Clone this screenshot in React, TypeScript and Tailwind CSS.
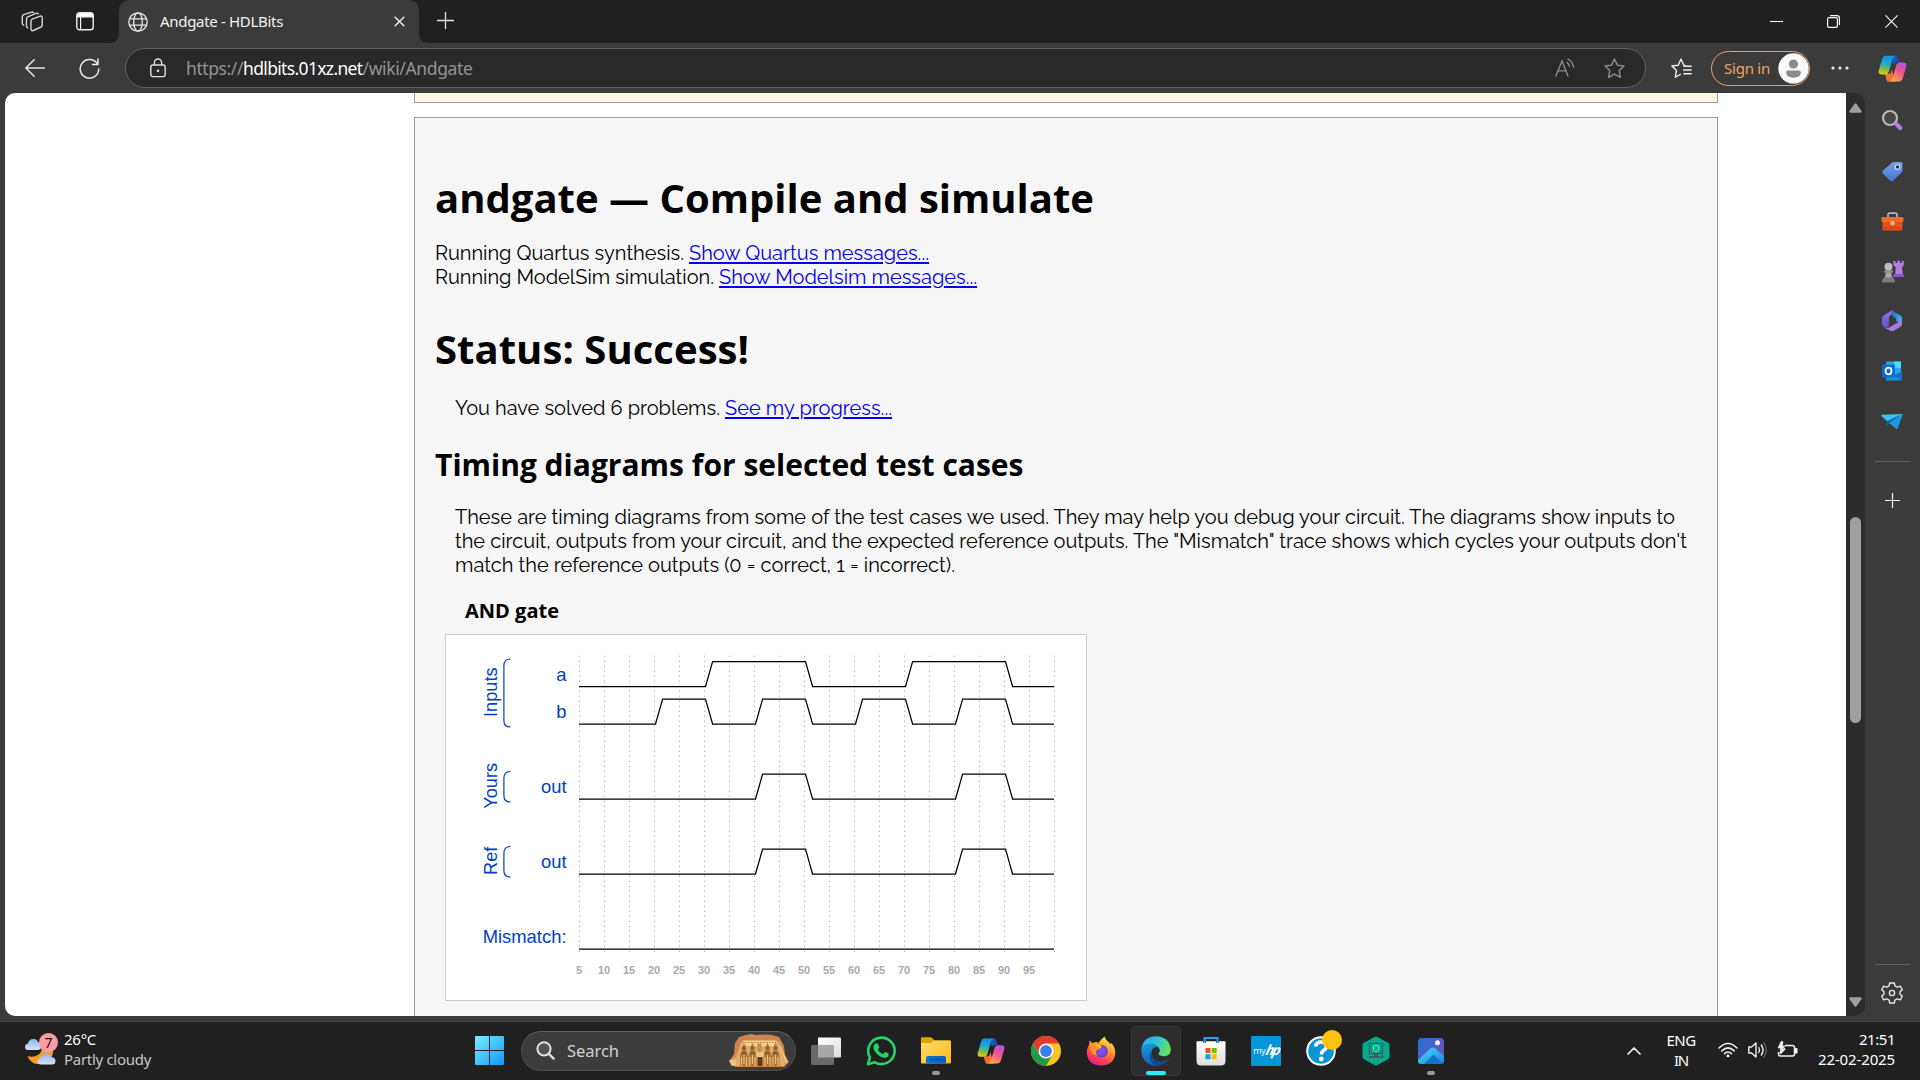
import React, { useLayoutEffect, useRef, useState } from "react";

/** A run of text whose tracking is adjusted so that it spans a given width. */
function Fit({ w, className = "", children }: { w: number; className?: string; children: string }) {
  const ref = useRef<HTMLSpanElement>(null);
  const [ls, setLs] = useState(0);
  useLayoutEffect(() => {
    if (!ref.current) return;
    const natural = ref.current.getBoundingClientRect().width;
    setLs((w - natural) / children.length);
  }, [w, children]);
  return (
    <span ref={ref} className={"whitespace-pre " + className} style={{ letterSpacing: ls + "px" }}>
      {children}
    </span>
  );
}

const ui = "font-['Noto_Sans','Open_Sans',sans-serif]";

/* ---------- browser chrome ---------- */

function TabBar() {
  return (
    <div className="flex h-[43px] items-end bg-[#202020] text-[#e6e6e6]">
      <div className="flex h-[43px] w-[119px] items-center bg-[#202020]">
        <svg className="ml-[21px]" width="23" height="22" viewBox="0 0 23 22" fill="none" stroke="#d6d6d6" strokeWidth="1.4" strokeLinejoin="round" strokeLinecap="round">
          <path d="M11.2 8.2 18.600 5.300q2.400-.8 2.600 1v7.600q0 1.500-1.200 2.100l-7.700 3.500q-2 .8-2.300-1V10q0-1.300 1.200-1.800Z" />
          <path d="M6.700 16.800l-.6-.4q-.6-.5-.6-1.400V7.900q0-1.500 1.200-2.100L14.900 2.300q1.600-.5 2.300.6" />
          <path d="M2.700 14.200l-.7-.4q-.7-.5-.7-1.500V5.700q0-1.500 1.200-2.100L10.500 1.100q1.400-.3 2 .5" />
        </svg>
        <svg className="ml-[32px]" width="18" height="19" viewBox="0 0 18 19" fill="none" stroke="#f0f0f0" strokeWidth="1.4">
          <rect x=".8" y="1" width="16.4" height="16.8" rx="2.8" />
          <path d="M1 2.8Q1.4 1 3.6 1h11q2.200 0 2.600 1.800v2H1Z" fill="#fff" />
          <path d="M4.600 5v12.600" strokeWidth="1.2" />
        </svg>
      </div>
      <div className="relative flex h-[43px] w-[300px] items-center rounded-t-[10px] bg-[#3b3b3b]">
        <svg className="absolute bottom-0 -left-[10px]" width="10" height="10"><path d="M10 0v10H0Q10 10 10 0Z" fill="#3b3b3b" /></svg>
        <svg className="absolute -right-[10px] bottom-0" width="10" height="10"><path d="M0 0v10h10Q0 10 0 0Z" fill="#3b3b3b" /></svg>
        <svg className="ml-[9px]" width="20" height="20" viewBox="0 0 20 20" fill="none" stroke="#e8e8e8" strokeWidth="1.3">
          <circle cx="10" cy="10" r="9.2" />
          <ellipse cx="10" cy="10" rx="4.3" ry="9.2" />
          <path d="M1.700 6.800h16.600M1.700 13.200h16.600" />
        </svg>
        <div className={ui + " mb-[2px] ml-[12px] w-[123px] text-[15px] leading-[20px] text-[#f4f4f4]"}>
          <Fit w={123}>Andgate - HDLBits</Fit>
        </div>
        <svg className="ml-[111px]" width="11" height="11" viewBox="0 0 11 11" stroke="#f0f0f0" strokeWidth="1.4"><path d="M.7.7l9.600 9.600M10.300.7.7 10.300" /></svg>
      </div>
      <svg className="mb-[14px] ml-[18px]" width="17" height="17" viewBox="0 0 17 17" stroke="#e6e6e6" strokeWidth="1.3"><path d="M8.500 0v17M0 8.500h17" /></svg>
      <div className="flex-1" />
      <div className="flex h-[43px] items-center">
        <svg width="13" height="13" viewBox="0 0 13 13" stroke="#f4f4f4" strokeWidth="1.1"><path d="M0 6.500h13" /></svg>
        <svg className="ml-[44px]" width="13" height="13" viewBox="0 0 13 13" fill="none" stroke="#f4f4f4" strokeWidth="1.2">
          <rect x=".6" y="2.600" width="9.800" height="9.800" rx="1.4" />
          <path d="M3 .6h7q2.400 0 2.400 2.400v7" />
        </svg>
        <svg className="mr-[22px] ml-[45px]" width="13" height="13" viewBox="0 0 13 13" stroke="#f4f4f4" strokeWidth="1.2"><path d="M.4.4l12.200 12.200M12.600.4.4 12.600" /></svg>
      </div>
    </div>
  );
}

function CopilotIcon({ size = 28, id }: { size?: number; id: string }) {
  return (
    <svg width={size} height={size} viewBox="0 0 28 28">
      <defs>
        <linearGradient id={id + "a"} x1="0.3" y1="0" x2="0.1" y2="1">
          <stop offset="0" stopColor="#1593dc" /><stop offset=".35" stopColor="#20a5d8" /><stop offset=".68" stopColor="#78bf4b" /><stop offset="1" stopColor="#ffc90c" />
        </linearGradient>
        <linearGradient id={id + "b"} x1="0.9" y1="0" x2="0.3" y2="1">
          <stop offset="0" stopColor="#ab57f0" /><stop offset=".45" stopColor="#ee4f8e" /><stop offset="1" stopColor="#ffa552" />
        </linearGradient>
        <linearGradient id={id + "c"} x1="0" y1="0" x2="1" y2="0">
          <stop offset="0" stopColor="#1266d4" /><stop offset="1" stopColor="#1b3fae" />
        </linearGradient>
      </defs>
      <path d="M13 1.600h3.600q2.200 0 2.900 2.300l1.300 4.300h-3.300q-2 0-2.600 2Z" fill={"url(#" + id + "c)"} />
      <path d="M7.400 26.500q2 0 3-2l3-9.700 3 11.700Z" fill="#f9643c" />
      <path d="M6.800 19.400l1.200 5q.6 2.100 2.600 2.100h7l-3.600-7.600Z" fill="#f4752f" />
      <path d="M7.600 1.600h9.200q-2 .4-2.800 3.200l-3.500 12q-.8 3-3.400 3H3.800q-4.100 0-3-4.100L4 4.900q1-3.300 3.600-3.300Z" fill={"url(#" + id + "a)"} />
      <path d="M20.400 26.500h-9.200q2-.4 2.800-3.200l3.500-12q.8-3 3.400-3h3.300q4.100 0 3 4.100L24 23.200q-1 3.300-3.600 3.300Z" fill={"url(#" + id + "b)"} />
    </svg>
  );
}

function Toolbar() {
  return (
    <div className="flex h-[50px] items-center bg-[#3b3b3b]">
      <svg className="ml-[25px]" width="20" height="18" viewBox="0 0 20 18" fill="none" stroke="#e8e8e8" strokeWidth="1.5" strokeLinecap="round" strokeLinejoin="round"><path d="M19.300 9H1M9.200.8.8 9l8.400 8.200" /></svg>
      <svg className="ml-[34px]" width="21" height="21" viewBox="0 0 21 21" fill="none" stroke="#e8e8e8" strokeWidth="1.5" strokeLinecap="round" strokeLinejoin="round"><path d="M18.600 6.200A9.300 9.300 0 1 0 19.800 11M19 1v5.500h-5.500" /></svg>
      <div className="ml-[25px] flex h-[40px] w-[1521px] items-center rounded-full border border-[#636363] bg-[#292929]">
        <svg className="ml-[24px]" width="16" height="20" viewBox="0 0 16 20" fill="none" stroke="#e0e0e0" strokeWidth="1.4">
          <rect x=".8" y="7" width="14.400" height="11.600" rx="2" />
          <path d="M4.400 7V4.600a3.600 3.600 0 0 1 7.200 0V7" />
          <circle cx="8" cy="12.800" r="1.300" fill="#e0e0e0" stroke="none" />
        </svg>
        <div className={ui + " ml-[20px] flex w-[290px] text-[17.500px] leading-[24px] text-[#949494]"}>
          <Fit w={57}>https://</Fit>
          <Fit w={119.5} className="text-white">hdlbits.01xz.net</Fit>
          <Fit w={110}>/wiki/Andgate</Fit>
        </div>
        <div className="flex-1" />
        <svg width="20" height="20" viewBox="0 0 20 20" fill="none" stroke="#8f8f8f" strokeWidth="1.3" strokeLinecap="round">
          <path d="M.8 18 7 3l6 15M3 12.800h8" />
          <path d="M12 4.400q2 1.400 2.400 4M13 1.200q4.600 2.400 5.600 8" />
        </svg>
        <svg className="mr-[20px] ml-[29px]" width="21" height="21" viewBox="0 0 21 21" fill="none" stroke="#8f8f8f" strokeWidth="1.4" strokeLinejoin="round"><path d="M10.500 1l2.900 6.100 6.600.9-4.800 4.600 1.200 6.700-5.900-3.200-5.900 3.200 1.200-6.700L1 8l6.600-.9Z" /></svg>
      </div>
      <svg className="ml-[25px]" width="21" height="21" viewBox="0 0 21 21" fill="none" stroke="#f0f0f0" strokeWidth="1.4" strokeLinejoin="round" strokeLinecap="round">
        <path d="M14 7.400l-1.200-.2L10 1 7.200 7.200.9 8l4.600 4.500-1.200 6.700 5-2.700" />
        <path d="M13 8.200h7.200M12.600 12h7.600M12.800 15.800h7.400" />
      </svg>
      <div className="ml-[19px] flex h-[35px] w-[99px] items-center justify-between rounded-full border-[1.5px] border-[#f0a15f] pl-[12px]">
        <span className={ui + " mb-[1px] text-[15px] leading-[20px] text-[#f3a263]"}><Fit w={46}>Sign in</Fit></span>
        <svg width="31" height="31" viewBox="0 0 31 31">
          <circle cx="15.500" cy="15.500" r="15.200" fill="#fafafa" />
          <circle cx="15.500" cy="11" r="4.600" fill="#8b8b8b" />
          <path d="M10 17.500h11q1.800 0 1.800 1.800 0 5.400-7.300 5.400t-7.300-5.400q0-1.800 1.800-1.800Z" fill="#8b8b8b" />
        </svg>
      </div>
      <svg className="ml-[21px]" width="18" height="4" viewBox="0 0 18 4" fill="#f0f0f0"><circle cx="2" cy="2" r="1.600" /><circle cx="9" cy="2" r="1.600" /><circle cx="16" cy="2" r="1.600" /></svg>
      <div className="ml-[29px]"><CopilotIcon id="cp1" size={29} /></div>
    </div>
  );
}

/* ---------- timing diagram ---------- */

const LEFT = 133;
const STEP = 25;

function wave(y: number, edges: number[]) {
  let high = false;
  let d = `M${LEFT} ${y}`;
  for (const t of edges) {
    const x = LEFT + (t / 5 - 1) * STEP;
    d += ` L${x + 1.5} ${high ? y - 25 : y}`;
    high = !high;
    d += ` L${x + 8.6} ${high ? y - 25 : y}`;
  }
  return d + ` L${LEFT + 19 * STEP} ${high ? y - 25 : y}`;
}

const traces = [
  { label: "a", y: 51.5, edges: [30, 50, 70, 90] },
  { label: "b", y: 89, edges: [20, 30, 40, 50, 60, 70, 80, 90] },
  { label: "out", y: 164, edges: [40, 50, 80, 90] },
  { label: "out", y: 239, edges: [40, 50, 80, 90] },
  { label: "Mismatch:", y: 314, edges: [] as number[] },
];

const groups = [
  { label: "Inputs", mid: 57.2, top: 24, bottom: 92 },
  { label: "Yours", mid: 150.8, top: 136.5, bottom: 167 },
  { label: "Ref", mid: 225.8, top: 211.5, bottom: 242 },
];

function TimingDiagram() {
  return (
    <div className="mt-[11px] ml-[10px] h-[367px] w-[642px] border border-[#cccccc] bg-white">
      <svg width="640" height="365" viewBox="0 0 640 365" className="font-['Liberation_Sans',Arial,sans-serif]">
        {Array.from({ length: 20 }, (_, i) => (
          <path key={i} d={`M${LEFT + i * STEP + 0.5} 20.500V318`} stroke="#bdbdbd" strokeWidth="1.1" strokeDasharray="1.400 3.600" />
        ))}
        {Array.from({ length: 19 }, (_, i) => (
          <text key={i} x={LEFT + i * STEP} y="339" textAnchor="middle" fontSize="11" fontWeight="bold" fill="#aaaaaa">{(i + 1) * 5}</text>
        ))}
        {traces.map((t, i) => (
          <g key={i}>
            <text x="120.500" y={t.y - 6} textAnchor="end" fontSize="18.400" fill="#0041c4">{t.label}</text>
            <path d={wave(t.y, t.edges)} fill="none" stroke="#000" strokeWidth="1.250" />
          </g>
        ))}
        {groups.map((g) => (
          <g key={g.label}>
            <text transform={`translate(51.3 ${g.mid}) rotate(-90)`} textAnchor="middle" fontSize="18.200" fill="#0041c4">{g.label}</text>
            <path d={`M64.500 ${g.top}q-6.600 0-6.600 6.600V${g.bottom - 6.6}q0 6.600 6.600 6.600`} fill="none" stroke="#0041c4" strokeWidth="1.2" />
          </g>
        ))}
      </svg>
    </div>
  );
}

/* ---------- page ---------- */

const head = "font-['Open_Sans','Noto_Sans',sans-serif] font-bold whitespace-nowrap";
const link = "text-[#0000ee] underline decoration-[1.5px] underline-offset-[2px]";

function Page() {
  return (
    <div className="h-[923px] w-[1841px] overflow-hidden rounded-l-[10px] bg-white pl-[409px] font-[Raleway,Lato,sans-serif] text-[20px] leading-[24px] text-black">
      <div className="h-[10px] w-[1304px] border border-t-0 border-[#999999] bg-[#fff6e5]" />
      <div className="mt-[14px] h-[920px] w-[1304px] border border-[#999999] bg-[#f6f6f6] pl-[20px]">
        <h1 className={head + " mt-[56px] text-[40px] leading-[48px]"}><Fit w={659}>andgate — Compile and simulate</Fit></h1>
        <div className="mt-[19px]">
          <div className="flex"><Fit w={254}>{"Running Quartus synthesis. "}</Fit><Fit w={240} className={link}>Show Quartus messages...</Fit></div>
          <div className="flex"><Fit w={284}>{"Running ModelSim simulation. "}</Fit><Fit w={258} className={link}>Show Modelsim messages...</Fit></div>
        </div>
        <h1 className={head + " mt-[36px] text-[40px] leading-[48px]"}><Fit w={314}>Status: Success!</Fit></h1>
        <p className="mt-[23px] ml-[20px] flex"><Fit w={270}>{"You have solved 6 problems. "}</Fit><Fit w={167} className={link}>See my progress...</Fit></p>
        <h2 className={head + " mt-[27px] text-[30px] leading-[36px]"}><Fit w={588.5}>Timing diagrams for selected test cases</Fit></h2>
        <div className="mt-[22px] ml-[20px] flex flex-col items-start">
          <Fit w={1220}>These are timing diagrams from some of the test cases we used. They may help you debug your circuit. The diagrams show inputs to</Fit>
          <Fit w={1232}>the circuit, outputs from your circuit, and the expected reference outputs. The "Mismatch" trace shows which cycles your outputs don't</Fit>
          <Fit w={500}>match the reference outputs (0 = correct, 1 = incorrect).</Fit>
        </div>
        <h4 className={head + " mt-[22px] ml-[30px] text-[20px] leading-[24px]"}><Fit w={94}>AND gate</Fit></h4>
        <TimingDiagram />
      </div>
    </div>
  );
}

function Scrollbar() {
  return (
    <div className="flex h-[923px] w-[19px] flex-col items-center rounded-r-[10px] bg-[#2c2c2c]">
      <svg className="mt-[10px]" width="13" height="10" viewBox="0 0 13 10"><path d="M5.600.8q.9-1 1.800 0l5 7q.8 1.800-1 2H1.600q-1.800-.2-1-2Z" fill="#9f9f9f" /></svg>
      <div className="mt-[404px] h-[206px] w-[11px] rounded-full bg-[#9f9f9f]" />
      <div className="flex-1" />
      <svg className="mb-[9px] rotate-180" width="13" height="10" viewBox="0 0 13 10"><path d="M5.600.8q.9-1 1.800 0l5 7q.8 1.800-1 2H1.600q-1.800-.2-1-2Z" fill="#9f9f9f" /></svg>
    </div>
  );
}

function Sidebar() {
  const cell = "flex h-[50px] w-full items-center justify-center";
  return (
    <div className="flex h-[928px] w-[54px] flex-col items-center pt-[3px]">
      <div className={cell}>
        <svg className="mb-[2px]" width="22" height="22" viewBox="0 0 22 22" fill="none">
          <circle cx="9" cy="9" r="7" stroke="#b9b9b9" strokeWidth="2.200" fill="#454545" />
          <path d="M15.600 15.200l3.600 3.800" stroke="#b77bef" strokeWidth="4.200" strokeLinecap="round" />
        </svg>
      </div>
      <div className={cell}>
        <svg width="21" height="21" viewBox="0 0 21 21">
          <defs><linearGradient id="tag" x1="0" y1="0" x2="0" y2="1"><stop offset="0" stopColor="#6fa3f0" /><stop offset="1" stopColor="#4a74cf" /></linearGradient></defs>
          <path d="M12 1h7q1.500 0 1.500 1.500v7q0 1-.7 1.700l-8.600 8.500q-1.500 1.300-3 0L1 12.500q-1.300-1.500 0-3L10 1.800q.8-.8 2-.8Z" fill="url(#tag)" />
          <circle cx="15.500" cy="6" r="2.300" fill="#333" stroke="#dfe6f4" strokeWidth="1.100" />
        </svg>
      </div>
      <div className={cell}>
        <svg width="23" height="19" viewBox="0 0 23 19">
          <path d="M7 6V3q0-1.800 1.800-1.800h5.400Q16 1.200 16 3v3" fill="none" stroke="#b5b5b5" strokeWidth="1.700" />
          <rect x="1.500" y="6" width="20" height="12.500" rx="1.600" fill="#e8501a" />
          <rect x=".5" y="5" width="22" height="5" rx="1.200" fill="#f36a2b" />
          <path d="M1.500 16h20" stroke="#c93a0c" strokeWidth="1" />
          <circle cx="11.500" cy="11.200" r="2.200" fill="#c5bdb8" />
        </svg>
      </div>
      <div className={cell}>
        <svg width="23" height="23" viewBox="0 0 23 23">
          <path d="M12.300 1h2.200v2h1.800V.8h2.600V3h1.800V1h2v4.500l-1.600 1.600.6 6.400 1 3.200h-9.400l1-3.200.4-6.400-2.400-2Z" fill="#b77be8" />
          <path d="M12.800 14h9.400l.8 3H12Z" fill="#8d55c4" />
          <circle cx="7.500" cy="6.800" r="4" fill="#bdbdbd" />
          <path d="M5.500 10h4l1.800 8H3.600Z" fill="#a8a8a8" />
          <rect x="2.800" y="10.500" width="9.400" height="2.200" rx="1.100" fill="#8f8f8f" />
          <path d="M3 17.300h9l2 3.200q.5 2-1.500 2h-10q-2 0-1.500-2Z" fill="#7d7d7d" />
        </svg>
      </div>
      <div className={cell}>
        <svg width="22" height="22" viewBox="0 0 22 22">
          <defs>
            <linearGradient id="ma" x1="0" y1="0" x2="0" y2="1"><stop offset="0" stopColor="#a06fe0" /><stop offset="1" stopColor="#5358c6" /></linearGradient>
            <linearGradient id="mb" x1="0" y1="0" x2="1" y2="0"><stop offset="0" stopColor="#1b56c8" /><stop offset="1" stopColor="#46b9ee" /></linearGradient>
          </defs>
          <path d="M11 .8l8.500 4.700q1.500 1 1.500 2.700v6L15.200 11V8.500L8.200 4Z" fill="url(#mb)" />
          <path d="M12 .6 8.500 6.300q-1 1.500-.7 3.200v7.200l-3.200 1.600Q1 16.500 1 13.600V8q0-1.700 1.500-2.600L9.500 1.200Q11 .4 12 .6Z" fill="url(#ma)" />
          <path d="M21 10v4.200q0 1.700-1.500 2.600l-6.800 4q-1.700.9-3.400 0l-5.500-3q3 .8 5.500-.9l5-3.200Z" fill="#a878d8" />
        </svg>
      </div>
      <div className={cell}>
        <svg width="22" height="22" viewBox="0 0 22 22">
          <rect x="5" y="1.500" width="15" height="14" rx="1.200" fill="#28a8ea" />
          <path d="M13 1.500h7V8h-7Z" fill="#50d9ff" />
          <path d="M5 11l9 4 7-4v8.500q0 1-1 1H5Z" fill="#1490df" />
          <path d="M12 16l9-5v9Z" fill="#1b6fc0" />
          <rect x="1" y="4.500" width="13" height="13" rx="1.200" fill="#0a6cce" />
          <ellipse cx="7.500" cy="11" rx="3" ry="3.300" fill="none" stroke="#fff" strokeWidth="1.800" />
        </svg>
      </div>
      <div className={cell}>
        <svg width="22" height="17" viewBox="0 0 22 17">
          <path d="M.8 1.800 21.200 1q.6.100.3.700L16.500 15q-.5 1.300-1.600.3L6.500 8.500.3 3Q0 2 .8 1.800Z" fill="#3cc3f2" />
          <path d="M21.300 1 6.200 8 5 12.500q.3.900 1 .3l3.500-3Z" fill="#1263b4" />
          <path d="M21.400 1.200 9.500 10.500l5.400 4.800q1.100 1 1.600-.3Z" fill="#199ae0" />
        </svg>
      </div>
      <div className="mt-[15px] h-px w-[35px] bg-[#626262]" />
      <svg className="mt-[31px]" width="15" height="15" viewBox="0 0 15 15" stroke="#f0f0f0" strokeWidth="1.200"><path d="M7.500 0v15M0 7.500h15" /></svg>
      <div className="flex-1" />
      <div className="h-px w-[35px] bg-[#626262]" />
      <svg className="mt-[17px] mb-[17px]" width="22" height="22" viewBox="-11 -11 22 22" fill="none" stroke="#e8e8e8" strokeWidth="1.400" strokeLinejoin="round">
        <path d="M-2.300-10 2.300-10 3-7 5.200-5.800 8.300-6.800 10.300-3 8-1.200V1.200L10.300 3 8.300 6.800 5.200 5.800 3 7 2.300 10H-2.300L-3 7-5.200 5.800-8.300 6.800-10.300 3-8 1.200V-1.200L-10.300-3-8.300-6.800-5.200-5.800-3-7Z" />
        <circle r="2.600" />
      </svg>
    </div>
  );
}

/* ---------- taskbar ---------- */

function Cell({ children, mark }: { children: React.ReactNode; mark?: "dot" }) {
  return (
    <div className="relative flex h-[50px] w-[55px] items-center justify-center pb-[1px]">
      {children}
      {mark && <div className="absolute bottom-[1px] left-[23.500px] h-[4px] w-[8px] rounded-full bg-[#9a9a9a]" />}
    </div>
  );
}

function Temple() {
  return (
    <svg width="60" height="34" viewBox="0 0 60 34">
      <path d="M1 26 5 20 6 9 10 3l7-2 5-1 5 1 10-.5 6 .5 7 2 5 9 1 9 4 7-5 5H6Z" fill="#cf8551" />
      <path d="M1 26l6-3 5-15 3-2h31l4 2 8 19-3 5H7Z" fill="#e0ac69" />
      <path d="M14 7h32l2 5H12Z" fill="#f3d08c" />
      <path d="M13 8.500h34" stroke="#a97439" strokeWidth="1" strokeDasharray="1.500 1.500" />
      {[15, 23.5, 38.5, 46.5].map((x) => (
        <g key={x}>
          <path d={`M${x - 4} 32v-10l2-5 0-4 2-4 2 4v4l2 5v10Z`} fill="#a9733a" />
          <path d={`M${x - 2.5} 32v-9M${x + 2.5} 32v-9M${x} 21v9`} stroke="#e9c07c" strokeWidth="1.200" />
          <path d={`M${x - 2} 14h4M${x - 3} 19h6`} stroke="#6f4820" strokeWidth="1" />
        </g>
      ))}
      <rect x="28.500" y="9.500" width="4" height="8" fill="#c08a4c" />
      <path d="M27.500 18.500h7v4.500h-7Z" fill="#eccb88" />
      <rect x="28.500" y="23" width="5" height="9" fill="#5c3a1b" />
      <path d="M1 27h5v4H3ZM51 12l7 17" stroke="#efc887" strokeWidth="1.500" fill="#f0c98a" />
    </svg>
  );
}

function Taskbar() {
  return (
    <div className={ui + " flex h-[59px] items-center border-t border-[#424242] bg-[#202020] text-[15px] leading-[20px] text-white"}>
      <div className="flex w-[475px] items-center">
        <svg className="ml-[24px]" width="36" height="36" viewBox="0 0 36 36">
          <defs>
            <linearGradient id="cl" x1="0" y1="0" x2="0" y2="1"><stop offset="0" stopColor="#8fb2ee" /><stop offset="1" stopColor="#d6e4fb" /></linearGradient>
          </defs>
          <path d="M29 16q1 7-4 10.500-6 5-13 4.500-6-1.500-8.500-8 6 2 11-1.500 3-2 3-6Z" fill="#f59a23" />
          <path d="M4 17q-3 0-3-3 0-3 3-3.500 1-5 6-4.500 3 0 4 3 3.500.5 3.500 4T14 17Z" fill="url(#cl)" />
          <path d="M17 31.500q-3.500 0-3.500-3t3-3.500q1-4.500 5.500-4.500t5.500 3.500q4 .5 4 4T28 31.500Z" fill="url(#cl)" />
          <circle cx="24.500" cy="9.500" r="9.500" fill="#ff99a4" />
          <text x="24.500" y="14.700" textAnchor="middle" fontSize="14" fill="#111">7</text>
        </svg>
        <div className="mb-[4px] ml-[4px] flex flex-col items-start">
          <Fit w={32}>26°C</Fit>
          <Fit w={87} className="text-[#c6c6c6]">Partly cloudy</Fit>
        </div>
      </div>
      <svg className="mb-[1px]" width="29" height="29" viewBox="0 0 29 29">
        <defs><linearGradient id="win" gradientUnits="userSpaceOnUse" x1="0" y1="0" x2="29" y2="29"><stop offset="0" stopColor="#78eeff" /><stop offset="1" stopColor="#0f97fb" /></linearGradient></defs>
        <path d="M1 0h13v14H0V1Q0 0 1 0ZM15 0h13q1 0 1 1v13H15ZM0 15h14v14H1q-1 0-1-1ZM15 15h14v13q0 1-1 1H15Z" fill="url(#win)" />
      </svg>
      <div className="mb-[1px] ml-[17px] flex h-[40px] w-[275px] items-center rounded-full border border-[#4c4c4c] border-t-[#616161] bg-[#3c3c3c]">
        <svg className="ml-[14px]" width="19" height="19" viewBox="0 0 19 19" fill="none" stroke="#e0e0e0" strokeWidth="2" strokeLinecap="round"><circle cx="8" cy="7.800" r="6.600" fill="#505254" /><path d="M12.800 12.800l4.800 4.800" strokeWidth="2.400" /></svg>
        <span className="ml-[12px] w-[162px] text-[16.500px] leading-[20px] text-[#d2d2d2]"><Fit w={52}>Search</Fit></span>
        <Temple />
      </div>
      <div className="ml-[2.500px] flex">
        <Cell>
          <svg width="30" height="28" viewBox="0 0 30 28">
            <defs><linearGradient id="tv" x1="0" y1="0" x2="1" y2="1"><stop offset="0" stopColor="#fff" /><stop offset="1" stopColor="#dcdcdc" /></linearGradient></defs>
            <rect x="7" y=".5" width="23" height="20" rx="1" fill="url(#tv)" />
            <rect x="0" y="8" width="23" height="20" rx="1.500" fill="#6a6a6a" />
            <rect x="7" y="8" width="16" height="12.500" fill="#a8a8a8" />
          </svg>
        </Cell>
        <Cell>
          <svg width="30" height="30" viewBox="0 0 30 30">
            <path d="M2 28.200 3.900 21.300A13.200 13.200 0 1 1 8.800 26.300Z" fill="#202020" stroke="#25d366" strokeWidth="2.600" strokeLinejoin="round" />
            <path d="M10 7.600h1.200q.6 0 .9.700l1.100 2.700q.2.500-.2 1l-1 1.300q-.3.400 0 .8 1.600 2.700 4.500 3.900.5.200.9-.2l1.200-1.500q.4-.5 1-.3l2.600 1.200q.6.300.6.900-.1 3-3.200 3.600-2 .4-5.300-1.300-4-2-6.200-6.200-1-2-.6-3.800.5-2 1.700-2.700Z" fill="#25d366" />
          </svg>
        </Cell>
        <Cell mark="dot">
          <svg width="30" height="27" viewBox="0 0 30 27">
            <defs>
              <linearGradient id="fo" x1="0" y1="0" x2="1" y2="1"><stop offset="0" stopColor="#ffdf6a" /><stop offset="1" stopColor="#fbb81b" /></linearGradient>
              <linearGradient id="fb" x1="0" y1="0" x2="1" y2="0"><stop offset="0" stopColor="#0f76ce" /><stop offset="1" stopColor="#0f5cb2" /></linearGradient>
            </defs>
            <path d="M0 1.500Q0 .3 1.200.3h8.500q.8 0 1.400.6L13.500 3.500H29v4H0Z" fill="#e0a208" />
            <path d="M0 6h9.500q1 0 1.600-.7l1.700-1.800H29q1 0 1 1v21q0 1-1 1H1q-1 0-1-1Z" fill="url(#fo)" />
            <path d="M5 26.500V21q0-2 2-2h16q2 0 2 2v5.500Z" fill="url(#fb)" />
            <path d="M8.500 22.700h13" stroke="#0b3f82" strokeWidth="1" />
          </svg>
        </Cell>
        <Cell><CopilotIcon id="cp2" size={28} /></Cell>
        <Cell>
          <svg width="30" height="30" viewBox="-15 -15 30 30">
            <circle r="15" fill="#fcc31e" />
            <path d="M-13-7.500A15 15 0 0 1 13-7.500H0L-6.500 3.750Z" fill="#e33b2e" />
            <path d="M-13-7.500A15 15 0 0 0 0 15L6.500 3.750H-6.500Z" fill="#229a48" />
            <circle r="7.500" fill="#fff" />
            <circle r="5.900" fill="#3b7ded" />
          </svg>
        </Cell>
        <Cell>
          <svg width="30" height="30" viewBox="0 0 30 30">
            <defs>
              <linearGradient id="ff" x1=".8" y1="0" x2=".3" y2="1"><stop offset="0" stopColor="#fff14a" /><stop offset=".35" stopColor="#ffa62c" /><stop offset=".7" stopColor="#ff4a46" /><stop offset="1" stopColor="#e8148a" /></linearGradient>
              <radialGradient id="fg"><stop offset="0" stopColor="#9a4ff2" /><stop offset="1" stopColor="#5f45c9" /></radialGradient>
            </defs>
            <path d="M18.500.5q1 3.500 4.500 6l1.500 2 .3-2Q29.500 11 29.300 17q-.8 12-14.300 12.700Q2 29 .8 17.500.5 13 3 8.500L3.500 4.500 6.500 7q3-1.500 5.500-1l-1 3q3-5 7.500-8.500Z" fill="url(#ff)" />
            <circle cx="15.500" cy="15.300" r="6.300" fill="url(#fg)" />
            <path d="M4 9.500q4-3 8-1l3.500 2.500q-1 2.500-4.500 2.700-2.300 2.800.5 5.800Q6 19 5 14Z" fill="#ff9426" />
            <path d="M8 8q5-1 8 2.500l-3 1.500Z" fill="#ffbe3c" />
          </svg>
        </Cell>
        <div className="relative mx-[2.500px] flex h-[50px] w-[50px] items-center justify-center rounded-[5px] border border-[#373737] bg-[#2d2d2d]">
          <svg className="mb-[1px]" width="30" height="30" viewBox="0 0 30 30">
            <defs>
              <linearGradient id="ea" x1="0" y1=".2" x2="1" y2=".5"><stop offset="0" stopColor="#2aa9e6" /><stop offset=".5" stopColor="#2fc5d4" /><stop offset="1" stopColor="#66e05a" /></linearGradient>
              <linearGradient id="eb" x1="0" y1="0" x2=".3" y2="1"><stop offset="0" stopColor="#1b9de2" /><stop offset="1" stopColor="#0b63b8" /></linearGradient>
            </defs>
            <path d="M.3 13.500Q2 .5 15 .2q13 .5 14.800 12.500.5 6-5 7.200-4 .8-6.800-.9-1-.8 0-2 1.800-3-.8-6Q9 5.500.3 13.500Z" fill="url(#ea)" />
            <path d="M.2 15Q1 8 9 7.500q6 .2 8.700 3.800-4.700-1.300-6.700 3-1.500 4.500 1.500 9 2.500 3 6.800 4.900-4 2-9 .7Q1 25.500.2 15Z" fill="url(#eb)" />
            <path d="M11 14.300q-2 8 5 10.700 6 1.500 11.500-2.200.7-.3.300.6-3.300 5-9.300 6.200-8 .4-9.500-7.600-.7-5 2-7.700Z" fill="#10498f" />
          </svg>
          <div className="absolute bottom-0 left-[14px] h-[4px] w-[20px] rounded-full bg-[#29eeff]" />
        </div>
        <Cell>
          <svg width="30" height="30" viewBox="0 0 30 30">
            <defs><linearGradient id="st" x1="0" y1="0" x2="0" y2="1"><stop offset="0" stopColor="#fff" /><stop offset="1" stopColor="#dedede" /></linearGradient></defs>
            <path d="M8.500 7V2h13v5" fill="none" stroke="#23a9ea" strokeWidth="2" />
            <path d="M.5 6q0-.8.800-.8H7v1.500h3V5.200h10v1.500h3V5.200h5.700q.8 0 .8.800v19q0 4.500-4.500 4.500H5Q.5 29.500.5 25Z" fill="url(#st)" />
            <path d="M9.500 12h5v5h-5Z" fill="#f25022" /><path d="M15.700 12h5v5h-5Z" fill="#7fba00" />
            <path d="M9.500 18.200h5v5h-5Z" fill="#00a4ef" /><path d="M15.700 18.200h5v5h-5Z" fill="#ffb900" />
          </svg>
        </Cell>
        <Cell>
          <div className="flex h-[30px] w-[30px] items-center justify-center rounded-[1px] bg-[#0496d6] pb-[1px] font-['Open_Sans',sans-serif] leading-none">
            <span className="text-[9px] tracking-[-0.200px] text-white">my</span>
            <span className="-skew-x-12 text-[14px] font-bold tracking-[-1.800px] text-white italic">hp</span>
          </div>
        </Cell>
        <Cell>
          <div className="relative h-[30px] w-[30px]">
            <svg width="30" height="30" viewBox="0 0 30 30">
              <circle cx="15" cy="15" r="13.800" fill="#0a94d4" stroke="#fff" strokeWidth="2" />
              <path d="M9.500 10.500q.8-4.500 5.500-4.500t5.500 4.300q0 2.700-3 4.200-2 1.200-2 4" fill="none" stroke="#fff" strokeWidth="3.600" />
              <circle cx="15.300" cy="23" r="2.400" fill="#fff" />
            </svg>
            <div className="absolute -top-[6px] left-[16px] size-[20px] rounded-full bg-[#ffc20e]" />
          </div>
        </Cell>
        <Cell>
          <svg width="28" height="30" viewBox="0 0 28 30">
            <path d="M12.500 1q1.500-.8 3 0l11 6q1 .7 1 2v12q0 1.300-1 2l-11 6q-1.500.8-3 0l-11-6q-1-.7-1-2V9q0-1.300 1-2Z" fill="#05a88c" />
            <rect x="7.500" y="7.500" width="13" height="10" fill="none" stroke="#3b5f60" strokeWidth="1.300" />
            <path d="M12 17.500h4v2.200h-4ZM7 20h11v2H7ZM19 19.500h2.500v2.500H19Z" fill="#3b5f60" />
            <path d="M12 9.500h4l.5 1.500v3L14 16l-2.500-2v-3Z" fill="none" stroke="#4ff0dc" strokeWidth="1" />
          </svg>
        </Cell>
        <Cell mark="dot">
          <svg width="26" height="26" viewBox="0 0 26 26">
            <defs>
              <linearGradient id="pa" x1="0" y1="0" x2="1" y2="1"><stop offset="0" stopColor="#1f72d6" /><stop offset="1" stopColor="#8448b0" /></linearGradient>
              <linearGradient id="pb" x1="0" y1="0" x2="1" y2="1"><stop offset="0" stopColor="#4fdcff" /><stop offset="1" stopColor="#1284dc" /></linearGradient>
              <clipPath id="pc"><rect width="26" height="26" rx="3.500" /></clipPath>
            </defs>
            <g clipPath="url(#pc)">
              <rect width="26" height="26" fill="url(#pa)" />
              <path d="M-1 23 12.500 10.500q2.500-2 5 0L27 19v8H-1Z" fill="url(#pb)" />
              <path d="M5 27 15.500 16.500 27 27Z" fill="#1373cc" />
              <circle cx="19.500" cy="4.700" r="2.500" fill="#f2ecff" />
            </g>
          </svg>
        </Cell>
      </div>
      <div className="flex-1" />
      <svg width="14" height="8" viewBox="0 0 14 8" fill="none" stroke="#f0f0f0" strokeWidth="1.700" strokeLinecap="round" strokeLinejoin="round"><path d="M1 7l6-6 6 6" /></svg>
      <div className="mb-[3px] ml-[25px] flex w-[30px] flex-col items-center"><Fit w={29}>ENG</Fit><Fit w={14}>IN</Fit></div>
      <svg className="mb-[2px] ml-[22px]" width="20" height="16" viewBox="0 0 20 16" fill="none" stroke="#f0f0f0" strokeWidth="1.500" strokeLinecap="round">
        <path d="M1 6q9-9 18 0M3.800 8.900q6.200-6 12.400 0M6.500 11.600q3.500-3.200 7 0" />
        <circle cx="10" cy="13.800" r="1.500" fill="#fff" stroke="none" />
      </svg>
      <svg className="mb-[2px] ml-[10px]" width="20" height="18" viewBox="0 0 20 18" fill="none" stroke="#f0f0f0" strokeWidth="1.400" strokeLinecap="round" strokeLinejoin="round">
        <path d="M.8 6h2.700L8 2v14l-4.500-4H.8Z" />
        <path d="M10.800 6.500q1.500 2.500 0 5M13.300 4q3.500 5 0 10" />
        <path d="M15.800 1.800q5 7.200 0 14.400" stroke="#606060" />
      </svg>
      <svg className="mb-[2px] ml-[9px]" width="21" height="18" viewBox="0 0 21 18" fill="none" stroke="#f0f0f0" strokeWidth="1.500" strokeLinejoin="round">
        <path d="M8 4.500h7.500q2 0 2 2v6.500q0 2-2 2H3.500q-2 0-2-2v-2" />
        <path d="M18.500 7.800v4h1.300v-4Z" fill="#f0f0f0" />
        <path d="M4 .5 1 7h2.500L3 11.500 8 5H5.500L6 .5Z" fill="#f0f0f0" strokeWidth=".6" />
        <path d="M3 12.500l5-5" strokeWidth="2" />
      </svg>
      <div className="mr-[25px] mb-[4px] ml-[20px] flex w-[77px] flex-col items-end"><Fit w={36}>21:51</Fit><Fit w={77}>22-02-2025</Fit></div>
    </div>
  );
}

export default function App() {
  return (
    <div className="flex h-[1080px] w-[1920px] flex-col overflow-hidden bg-[#3b3b3b]">
      <TabBar />
      <Toolbar />
      <div className="flex h-[928px] pl-[5px]">
        <Page />
        <Scrollbar />
        <Sidebar />
      </div>
      <Taskbar />
    </div>
  );
}
